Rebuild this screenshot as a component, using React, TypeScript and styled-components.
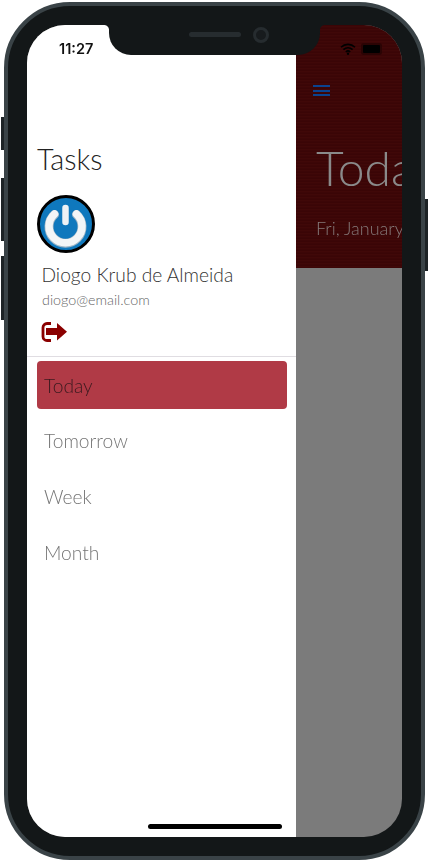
import React from 'react';
import styled, { createGlobalStyle } from 'styled-components';

const GlobalStyle = createGlobalStyle`
  html, body {
    margin: 0;
    padding: 0;
    background: #fff;
    font-family: "Lato", "Liberation Sans", sans-serif;
  }
`;

const Stage = styled.div`
  width: 429px;
  height: 866px;
  padding-top: 2px;
  box-sizing: border-box;
  display: grid;
  grid-template-columns: 4px minmax(0, 1fr) 4px;
  overflow: hidden;
`;

const ButtonRail = styled.div<{ $side: 'left' | 'right' }>`
  display: flex;
  flex-direction: column;
  padding-top: ${p => (p.$side === 'left' ? 115 : 197)}px;
  padding-left: ${p => (p.$side === 'left' ? 1 : 0)}px;
  padding-right: ${p => (p.$side === 'right' ? 1 : 0)}px;
`;

const SideButton = styled.div<{ $height: number; $gap?: number }>`
  height: ${p => p.$height}px;
  margin-bottom: ${p => p.$gap ?? 0}px;
  background: #1d2326;
`;

const Phone = styled.div`
  height: 858px;
  min-width: 0;
  box-sizing: border-box;
  padding: 19px;
  background: #131718;
  border: 4px solid #3a4347;
  border-radius: 66px;
`;

const Screen = styled.div`
  position: relative;
  display: flex;
  height: 100%;
  overflow: hidden;
  border-radius: 38px;
  background: #7b7b7b;
  will-change: opacity;
`;

const StatusBar = styled.div`
  position: absolute;
  top: 0;
  left: 0;
  right: 0;
  display: grid;
  grid-template-columns: 82px 211px 1fr;
  z-index: 3;
`;

const Notch = styled.div`
  position: relative;
  height: 30px;
  background: #131718;
  border-radius: 0 0 22px 22px;
  display: flex;
  align-items: flex-start;
  gap: 12px;
  padding: 2px 0 0 80px;
  box-sizing: border-box;

  &::before,
  &::after {
    content: '';
    position: absolute;
    top: 0;
    width: 5px;
    height: 5px;
  }

  &::before {
    left: -5px;
    background: radial-gradient(circle at 0 100%, transparent 4.5px, #131718 5.5px);
  }

  &::after {
    right: -5px;
    background: radial-gradient(circle at 100% 100%, transparent 4.5px, #131718 5.5px);
  }
`;

const Speaker = styled.div`
  margin-top: 5px;
  width: 52px;
  height: 5px;
  border-radius: 3px;
  background: #262c2f;
`;

const Camera = styled.div`
  width: 10px;
  height: 10px;
  border: 3px solid #262c2f;
  border-radius: 50%;
  background: #171b1d;
`;

const Clock = styled.div`
  padding: 16px 0 0 32px;
  font-family: "Inter", "Liberation Sans", sans-serif;
  font-size: 14.5px;
  line-height: 16px;
  font-weight: 600;
  color: #111;
`;

const StatusIcons = styled.div`
  display: flex;
  align-items: center;
  align-self: flex-start;
  gap: 5px;
  padding: 18px 0 0 20px;
`;

const Battery = styled.div`
  width: 17px;
  height: 8px;
  background: #000;
  border: 2px solid #2a0404;
  border-radius: 3px;
`;

const Drawer = styled.aside`
  width: 269px;
  flex: none;
  box-sizing: border-box;
  background: #fff;
  padding-top: 116px;
  display: flex;
  flex-direction: column;
`;

const DrawerTitle = styled.h1`
  margin: 0 0 0 10px;
  font-size: 28.8px;
  line-height: 36px;
  font-weight: 300;
  color: #222;
`;

const Profile = styled.div`
  padding: 18px 0 0 10px;
  height: 180px;
  box-sizing: border-box;
  border-bottom: 1px solid #e0dde2;
`;

const Avatar = styled.svg`
  display: block;
  width: 58px;
  height: 58px;
`;

const UserName = styled.div`
  margin: 10px 0 0 4.5px;
  font-size: 19.2px;
  line-height: 24px;
  font-weight: 300;
  color: #333;
`;

const UserEmail = styled.div`
  margin: 4px 0 0 5px;
  font-size: 14.3px;
  line-height: 18px;
  font-weight: 300;
  color: #666;
`;

const LogoutIcon = styled.svg`
  display: block;
  margin: 13px 0 0 4px;
  width: 26px;
  height: 20px;
`;

const Menu = styled.nav`
  padding: 4px 9px 0 10px;
  display: flex;
  flex-direction: column;
  gap: 8px;
`;

const MenuItem = styled.div<{ $active?: boolean }>`
  height: 48px;
  box-sizing: border-box;
  display: flex;
  align-items: center;
  padding: 0 0 ${p => (p.$active ? 0 : 2)}px 7px;
  border-radius: 4px;
  font-size: 19.2px;
  font-weight: 300;
  color: ${p => (p.$active ? '#3a1a1f' : '#757575')};
  background: ${p => (p.$active ? '#b03a46' : 'transparent')};
`;

const HomeBar = styled.div`
  margin: auto 0 8px 121px;
  width: 134px;
  height: 5px;
  flex: none;
  border-radius: 3px;
  background: #000;
`;

const Main = styled.main`
  flex: 1;
  min-width: 0;
  overflow: hidden;
`;

const Banner = styled.header`
  height: 243px;
  box-sizing: border-box;
  padding-top: 60px;
  background: repeating-linear-gradient(0deg, #3c0607 0 1px, #400808 1px 2px, #3a0506 2px 3px);
  white-space: nowrap;
`;

const MenuButton = styled.div`
  display: flex;
  flex-direction: column;
  gap: 2.7px;
  width: 17px;
  margin-left: 17px;
`;

const MenuBar = styled.span`
  display: block;
  height: 2px;
  background: #0a4390;
`;

const BannerTitle = styled.div`
  margin: 43px 0 0 20px;
  font-size: 48px;
  line-height: 58px;
  font-weight: 300;
  color: #8a8a8a;
`;

const BannerDate = styled.div`
  margin: 20px 0 0 20px;
  font-size: 18px;
  line-height: 22px;
  font-weight: 300;
  color: #857a7a;
`;

const menuItems = ['Today', 'Tomorrow', 'Week', 'Month'];

const App = () => (
  <>
    <GlobalStyle />
    <Stage>
      <ButtonRail $side="left">
        <SideButton $height={33} $gap={28} />
        <SideButton $height={63} $gap={15} />
        <SideButton $height={64} />
      </ButtonRail>
      <Phone>
        <Screen>
          <StatusBar>
            <Clock>11:27</Clock>
            <Notch>
              <Speaker />
              <Camera />
            </Notch>
            <StatusIcons>
              <svg width="16" height="12" viewBox="0 0 16 12">
                <path d="M1 4.2a10 10 0 0 1 14 0M3.4 6.6a6.6 6.6 0 0 1 9.2 0M5.8 9a3.2 3.2 0 0 1 4.4 0" fill="none" stroke="#000" strokeWidth="1.6" />
                <circle cx="8" cy="10.8" r="1.2" fill="#000" />
              </svg>
              <Battery />
            </StatusIcons>
          </StatusBar>
          <Drawer>
            <DrawerTitle>Tasks</DrawerTitle>
            <Profile>
              <Avatar viewBox="0 0 58 58">
                <circle cx="29" cy="29" r="27.5" fill="#0f78bd" stroke="#000" strokeWidth="3" />
                <path d="M17.5 19.5a16.5 16.5 0 1 0 22 0" fill="none" stroke="#9fb6c6" strokeWidth="9" strokeLinecap="round" />
                <path d="M17.5 19a16.5 16.5 0 1 0 22 0" fill="none" stroke="#f2f5f7" strokeWidth="7.5" strokeLinecap="round" />
                <line x1="28.5" y1="13" x2="28.5" y2="27" stroke="#eef2f5" strokeWidth="6.5" strokeLinecap="round" />
              </Avatar>
              <UserName>Diogo Krub de Almeida</UserName>
              <UserEmail>diogo@email.com</UserEmail>
              <LogoutIcon viewBox="0 0 26 20">
                <path d="M10 1.5H6a4 4 0 0 0-4 4v9a4 4 0 0 0 4 4h4" fill="none" stroke="#8b0000" strokeWidth="2.8" />
                <path d="M5 6h11V1l10 8.7L16 18.5v-5.5H5z" fill="#8b0000" />
              </LogoutIcon>
            </Profile>
            <Menu>
              {menuItems.map((item, i) => (
                <MenuItem key={item} $active={i === 0}>{item}</MenuItem>
              ))}
            </Menu>
            <HomeBar />
          </Drawer>
          <Main>
            <Banner>
              <MenuButton>
                <MenuBar />
                <MenuBar />
                <MenuBar />
              </MenuButton>
              <BannerTitle>Today</BannerTitle>
              <BannerDate>Fri, January</BannerDate>
            </Banner>
          </Main>
        </Screen>
      </Phone>
      <ButtonRail $side="right">
        <SideButton $height={72} />
      </ButtonRail>
    </Stage>
  </>
);

export default App;
